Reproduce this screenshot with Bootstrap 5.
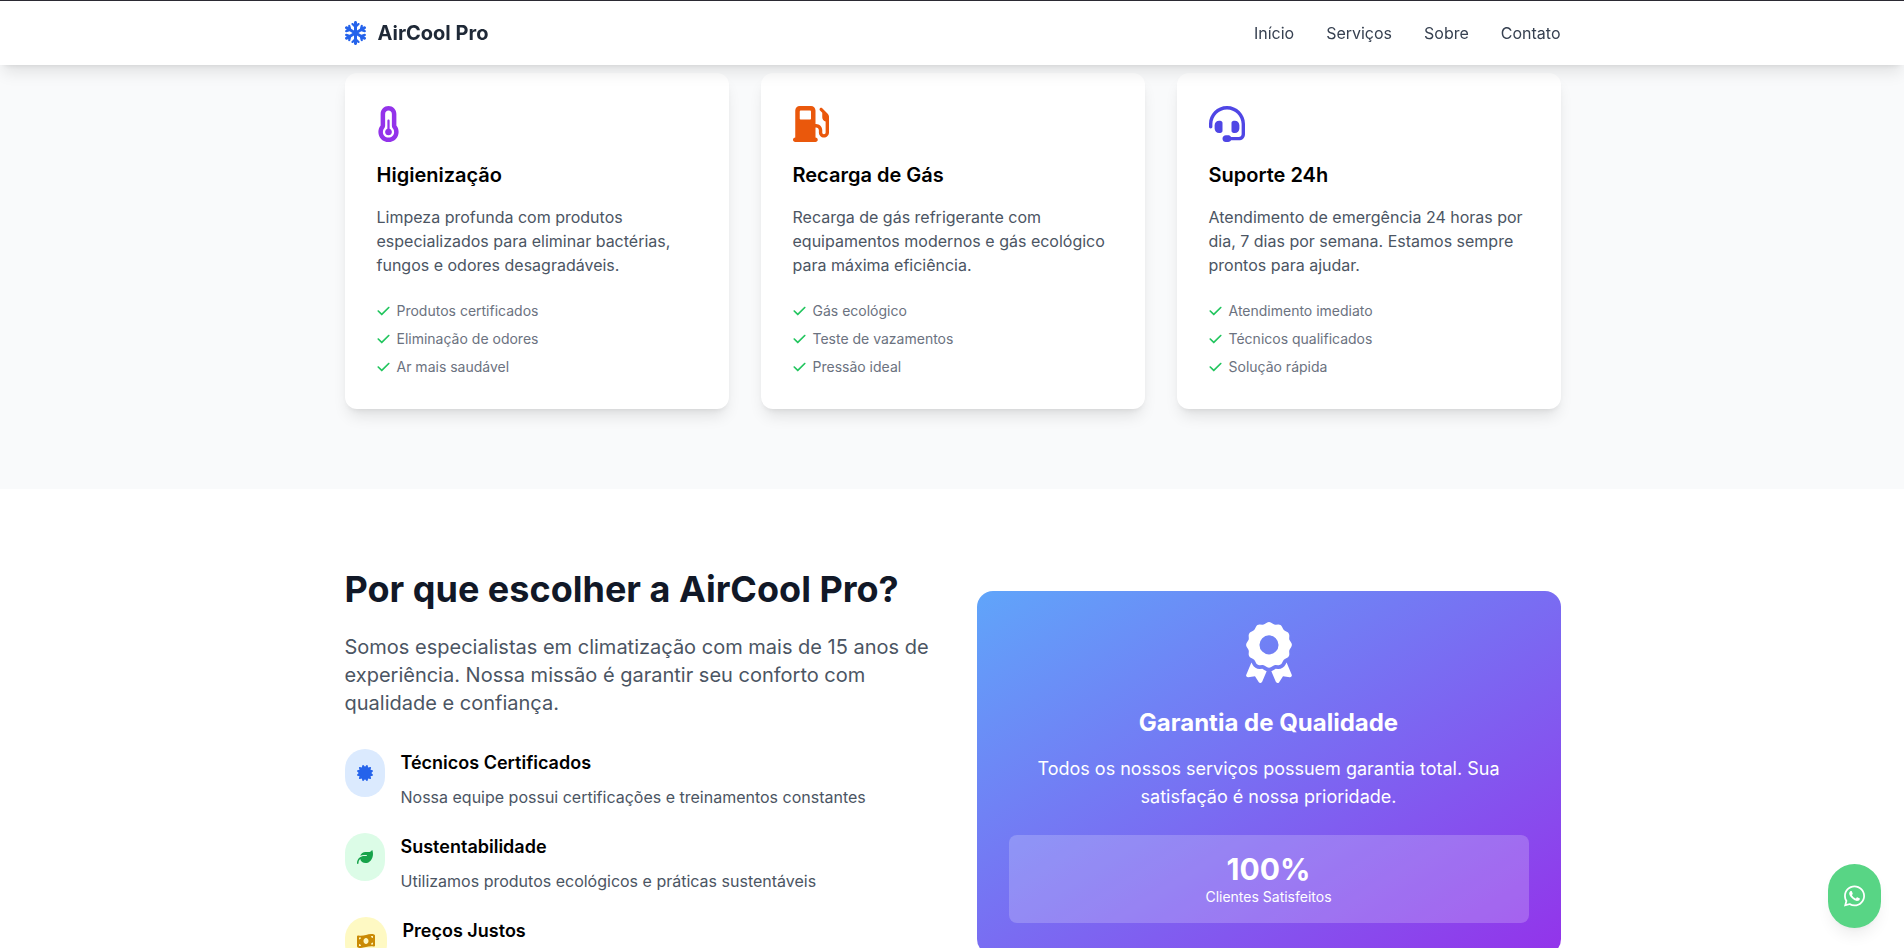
<!DOCTYPE html>
<html lang="pt-BR">
<head>
<meta charset="utf-8">
<meta name="viewport" content="width=device-width, initial-scale=1">
<title>AirCool Pro</title>
<link href="https://cdn.jsdelivr.net/npm/bootstrap@5.3.0/dist/css/bootstrap.min.css" rel="stylesheet">
<style>
  body { font-family: Inter, "Liberation Sans", sans-serif; font-size: 16px; line-height: 24px; color: #000; background: #fff; }
  .page-view { border-top: 1px solid #2b2a33; }
  .wrap { max-width: 1281px; margin: 0 auto; padding: 0 32px 0 33px; }
  .ico { display: block; fill: currentColor; flex-shrink: 0; }
  .soft-shadow { box-shadow: 0 10px 15px -3px rgba(0,0,0,.1), 0 4px 6px -4px rgba(0,0,0,.1); }

  .topbar { background: #fff; height: 64px; padding: 0; }
  .topbar .wrap { width: 100%; }
  .brand { font-size: 20px; line-height: 28px; font-weight: 700; color: #1f2937; gap: 12px; }
  .brand .ico { color: #2563eb; }
  .menu { gap: 32px; }
  .menu a { color: #374151; text-decoration: none; }

  .services { background: #f9fafb; padding: 8px 0 80px; }
  .services .row { --bs-gutter-x: 32px; --bs-gutter-y: 32px; margin-top: 0; }
  .services .row > * { margin-top: 0; }
  .service { background: #fff; border-radius: 12px; padding: 32px; height: 100%; }
  .service-icon { height: 38px; margin-bottom: 18px; display: flex; align-items: center; }
  .service h3 { font-size: 20px; line-height: 28px; font-weight: 600; margin-bottom: 16px; }
  .service p { color: #4b5563; margin-bottom: 24px; }
  .service ul { font-size: 14px; line-height: 20px; color: #6b7280; display: grid; gap: 8px; }
  .service li { display: flex; align-items: center; gap: 7px; }
  .service li .ico { color: #22c55e; }
  .tone-purple { color: #9333ea; }
  .tone-orange { color: #ea580c; }
  .tone-indigo { color: #4f46e5; }

  .about { padding: 80px 0; }
  .about .row { --bs-gutter-x: 48px; }
  .about h2 { font-size: 36px; line-height: 40px; font-weight: 700; color: #111827; margin-bottom: 24px; }
  .intro { font-size: 20px; line-height: 28px; color: #4b5563; margin: 0 -4px 32px 0; }
  .reasons { display: grid; gap: 24px; }
  .reason { display: flex; align-items: flex-start; gap: 16px; min-height: 60px; }
  .reason h4 { font-size: 18px; line-height: 28px; font-weight: 600; margin-bottom: 8px; }
  .reason p { color: #4b5563; margin: 0; }
  .pill { padding: 12px; border-radius: 999px; display: flex; align-items: center; height: 48px; }
  .pill-blue { background: #dbeafe; color: #2563eb; }
  .pill-green { background: #dcfce7; color: #16a34a; }
  .pill-yellow { background: #fef9c3; color: #ca8a04; }

  .guarantee { background: linear-gradient(to bottom right, #60a5fa, #9333ea); border-radius: 16px; padding: 31px 32px 32px; color: #fff; text-align: center; }
  .guarantee .ico { margin: 0 auto 24px; }
  .guarantee h3 { font-size: 24px; line-height: 32px; font-weight: 700; margin-bottom: 16px; }
  .guarantee p { font-size: 18px; line-height: 28px; margin-bottom: 24px; }
  .score { background: rgba(255,255,255,.2); border-radius: 8px; padding: 16px; }
  .score-value { font-size: 30px; line-height: 36px; font-weight: 700; }
  .score-label { font-size: 14px; line-height: 20px; }

  .chat { right: 23px; bottom: 20px; padding: 16px; border-radius: 999px; background: #58d585; color: #fff; box-shadow: 0 10px 15px -3px rgba(0,0,0,.07), 0 4px 6px -4px rgba(0,0,0,.07); height: 64px; display: flex; align-items: center; z-index: 1040; }
</style>
</head>
<body>
<svg class="d-none" aria-hidden="true">
  <symbol id="check" viewBox="0 0 448 512"><path d="M438.6 105.4c12.5 12.5 12.5 32.8 0 45.3l-256 256c-12.5 12.5-32.8 12.5-45.3 0l-128-128c-12.5-12.5-12.5-32.8 0-45.3s32.8-12.5 45.3 0L160 338.7 393.4 105.4c12.5-12.5 32.8-12.5 45.3 0z"/></symbol>
</svg>

<div class="page-view vh-100 overflow-hidden">
  <nav class="topbar soft-shadow navbar sticky-top">
    <div class="wrap d-flex align-items-center justify-content-between">
      <a href="#" class="brand d-flex align-items-center text-decoration-none">
        <svg class="ico" width="21" height="24" viewBox="0 0 448 512"><path d="M224 0c17.7 0 32 14.3 32 32V62.1l15-15c9.4-9.4 24.6-9.4 33.9 0s9.4 24.6 0 33.9l-49 49v70.3l61.4-35.8 17.7-66.1c3.4-12.8 16.6-20.4 29.4-17s20.4 16.6 17 29.4l-5.2 19.3 23.6-13.8c15.3-8.9 34.9-3.7 43.8 11.5s3.8 34.9-11.5 43.8l-25.3 14.8 21.7 5.8c12.8 3.4 20.4 16.6 17 29.4s-16.6 20.4-29.4 17l-67.7-18.1L287.5 256l60.9 35.5 67.7-18.1c12.8-3.4 26 4.2 29.4 17s-4.2 26-17 29.4l-21.7 5.8 25.3 14.8c15.3 8.9 20.4 28.5 11.5 43.8s-28.5 20.4-43.8 11.5l-23.6-13.8 5.2 19.3c3.4 12.8-4.2 26-17 29.4s-26-4.2-29.4-17l-17.7-66.1L256 311.7v70.3l49 49c9.4 9.4 9.4 24.6 0 33.9s-24.6 9.4-33.9 0l-15-15V480c0 17.7-14.3 32-32 32s-32-14.3-32-32V449.9l-15 15c-9.4 9.4-24.6 9.4-33.9 0s-9.4-24.6 0-33.9l49-49V311.7l-61.4 35.8-17.7 66.1c-3.4 12.8-16.6 20.4-29.4 17s-20.4-16.6-17-29.4l5.2-19.3L48.1 395.6c-15.3 8.9-34.9 3.7-43.8-11.5s-3.7-34.9 11.5-43.8l25.3-14.8-21.7-5.8c-12.8-3.4-20.4-16.6-17-29.4s16.6-20.4 29.4-17l67.7 18.1L160.5 256 99.6 220.5 31.9 238.6c-12.8 3.4-26-4.2-29.4-17s4.2-26 17-29.4l21.7-5.8L15.9 171.6C.6 162.7-4.5 143.1 4.4 127.9s28.5-20.4 43.8-11.5l23.6 13.8-5.2-19.3c-3.4-12.8 4.2-26 17-29.4s26 4.2 29.4 17l17.7 66.1L192 200.3V129.9L143 81c-9.4-9.4-9.4-24.6 0-33.9s24.6-9.4 33.9 0l15 15V32c0-17.7 14.3-32 32-32z"/></svg>
        <span>AirCool Pro</span>
      </a>
      <div class="menu d-flex">
        <a href="#">Início</a>
        <a href="#servicos">Serviços</a>
        <a href="#sobre">Sobre</a>
        <a href="#">Contato</a>
      </div>
    </div>
  </nav>

  <section class="services" id="servicos">
    <div class="wrap">
      <div class="row">
        <div class="col-4">
          <article class="service soft-shadow">
            <div class="service-icon tone-purple"><svg class="ico" width="23" height="36" viewBox="0 0 320 512"><path d="M160 64c-26.5 0-48 21.5-48 48V276.5c0 17.3-7.1 31.9-15.3 42.5C86.2 332.6 80 349.5 80 368c0 44.2 35.8 80 80 80s80-35.8 80-80c0-18.5-6.2-35.4-16.7-48.9c-8.2-10.6-15.3-25.2-15.3-42.5V112c0-26.5-21.5-48-48-48zM48 112C48 50.2 98.1 0 160 0s112 50.1 112 112V276.5c0 .1 .1 .3 .2 .6c.2 .6 .8 1.6 1.7 2.8c18.9 24.4 30.1 55 30.1 88.1c0 79.5-64.5 144-144 144S16 447.5 16 368c0-33.2 11.2-63.8 30.1-88.1c.9-1.2 1.5-2.2 1.7-2.8c.1-.3 .2-.5 .2-.6V112zM208 368c0 26.5-21.5 48-48 48s-48-21.5-48-48c0-20.9 13.4-38.7 32-45.3V208c0-8.8 7.2-16 16-16s16 7.2 16 16V322.7c18.6 6.6 32 24.4 32 45.3z"/></svg></div>
            <h3>Higienização</h3>
            <p>Limpeza profunda com produtos especializados para eliminar bactérias, fungos e odores desagradáveis.</p>
            <ul class="list-unstyled mb-0">
              <li><svg class="ico" width="13" height="14"><use href="#check"/></svg>Produtos certificados</li>
              <li><svg class="ico" width="13" height="14"><use href="#check"/></svg>Eliminação de odores</li>
              <li><svg class="ico" width="13" height="14"><use href="#check"/></svg>Ar mais saudável</li>
            </ul>
          </article>
        </div>
        <div class="col-4">
          <article class="service soft-shadow">
            <div class="service-icon tone-orange"><svg class="ico" width="36" height="36" viewBox="0 0 512 512"><path d="M32 64C32 28.7 60.7 0 96 0H256c35.3 0 64 28.7 64 64V256h8c48.6 0 88 39.4 88 88v32c0 13.3 10.7 24 24 24s24-10.7 24-24V222c-27.6-7.1-48-32.2-48-62V96L384 64c-8.8-8.8-8.8-23.2 0-32s23.2-8.8 32 0l77.3 77.3c12 12 18.7 28.3 18.7 45.3V168v24 32V376c0 39.8-32.2 72-72 72s-72-32.2-72-72V344c0-22.1-17.9-40-40-40h-8V448c17.7 0 32 14.3 32 32s-14.3 32-32 32H32c-17.7 0-32-14.3-32-32s14.3-32 32-32V64zM96 80v96c0 8.8 7.2 16 16 16H240c8.8 0 16-7.2 16-16V80c0-8.8-7.2-16-16-16H112c-8.8 0-16 7.2-16 16z"/></svg></div>
            <h3>Recarga de Gás</h3>
            <p>Recarga de gás refrigerante com equipamentos modernos e gás ecológico para máxima eficiência.</p>
            <ul class="list-unstyled mb-0">
              <li><svg class="ico" width="13" height="14"><use href="#check"/></svg>Gás ecológico</li>
              <li><svg class="ico" width="13" height="14"><use href="#check"/></svg>Teste de vazamentos</li>
              <li><svg class="ico" width="13" height="14"><use href="#check"/></svg>Pressão ideal</li>
            </ul>
          </article>
        </div>
        <div class="col-4">
          <article class="service soft-shadow">
            <div class="service-icon tone-indigo"><svg class="ico" width="36" height="36" viewBox="0 0 512 512"><path d="M256 48C141.1 48 48 141.1 48 256v40c0 13.3-10.7 24-24 24s-24-10.7-24-24V256C0 114.6 114.6 0 256 0S512 114.6 512 256V400.1c0 48.6-39.4 88-88.1 88L313.6 488c-8.3 14.3-23.8 24-41.6 24H240c-26.5 0-48-21.5-48-48s21.5-48 48-48h32c17.8 0 33.3 9.7 41.6 24l110.4 .1c22.1 0 40-17.9 40-40V256c0-114.9-93.1-208-208-208zM144 208h16c17.7 0 32 14.3 32 32V352c0 17.7-14.3 32-32 32H144c-35.3 0-64-28.7-64-64V272c0-35.3 28.7-64 64-64zm224 0c35.3 0 64 28.7 64 64v48c0 35.3-28.7 64-64 64H352c-17.7 0-32-14.3-32-32V240c0-17.7 14.3-32 32-32h16z"/></svg></div>
            <h3>Suporte 24h</h3>
            <p>Atendimento de emergência 24 horas por dia, 7 dias por semana. Estamos sempre prontos para ajudar.</p>
            <ul class="list-unstyled mb-0">
              <li><svg class="ico" width="13" height="14"><use href="#check"/></svg>Atendimento imediato</li>
              <li><svg class="ico" width="13" height="14"><use href="#check"/></svg>Técnicos qualificados</li>
              <li><svg class="ico" width="13" height="14"><use href="#check"/></svg>Solução rápida</li>
            </ul>
          </article>
        </div>
      </div>
    </div>
  </section>

  <section class="about" id="sobre">
    <div class="wrap">
      <div class="row align-items-center">
        <div class="col-6">
          <h2>Por que escolher a AirCool Pro?</h2>
          <p class="intro">Somos especialistas em climatização com mais de 15 anos de experiência. Nossa missão é garantir seu conforto com qualidade e confiança.</p>
          <div class="reasons">
            <div class="reason">
              <div class="pill pill-blue"><svg class="ico" width="16" height="16" viewBox="0 0 512 512"><path d="M211 7.3C205 1 196-1.4 187.6 .8s-14.9 8.9-17.1 17.3L154.7 80.6l-62-17.5c-8.4-2.4-17.4 0-23.5 6.1s-8.5 15.1-6.1 23.5l17.5 62L18.1 170.6c-8.4 2.1-15 8.7-17.3 17.1S1 205 7.3 211l46.2 45L7.3 301C1 307-1.4 316 .8 324.4s8.9 14.9 17.3 17.1l62.5 15.8-17.5 62c-2.4 8.4 0 17.4 6.1 23.5s15.1 8.5 23.5 6.1l62-17.5 15.8 62.5c2.1 8.4 8.7 15 17.1 17.3s17.3-.2 23.4-6.4l45-46.2 45 46.2c6.1 6.2 15 8.7 23.4 6.4s14.9-8.9 17.1-17.3l15.8-62.5 62 17.5c8.4 2.4 17.4 0 23.5-6.1s8.5-15.1 6.1-23.5l-17.5-62 62.5-15.8c8.4-2.1 15-8.7 17.3-17.1s-.2-17.4-6.4-23.4l-46.2-45 46.2-45c6.2-6.1 8.7-15 6.4-23.4s-8.9-14.9-17.3-17.1l-62.5-15.8 17.5-62c2.4-8.4 0-17.4-6.1-23.5s-15.1-8.5-23.5-6.1l-62 17.5L341.4 18.1c-2.1-8.4-8.7-15-17.1-17.3S307 1 301 7.3L256 53.5 211 7.3z"/></svg></div>
              <div>
                <h4>Técnicos Certificados</h4>
                <p>Nossa equipe possui certificações e treinamentos constantes</p>
              </div>
            </div>
            <div class="reason">
              <div class="pill pill-green"><svg class="ico" width="16" height="16" viewBox="0 0 512 512"><path d="M272 96c-78.6 0-145.1 51.5-167.7 122.5c33.6-17 71.5-26.5 111.7-26.5h88c8.8 0 16 7.2 16 16s-7.2 16-16 16H288 216s0 0 0 0c-16.6 0-32.7 1.9-48.3 5.4c-25.9 5.9-49.9 16.4-71.4 30.7c0 0 0 0 0 0C38.3 298.8 0 364.9 0 440v16c0 13.3 10.7 24 24 24s24-10.7 24-24V440c0-48.7 20.7-92.5 53.8-123.2C121.6 392.3 190.3 448 272 448l1 0c132.1-.7 239-130.9 239-291.4c0-42.6-7.5-83.1-21.1-119.6c-2.6-6.9-12.7-6.6-16.2-.1C455.9 72.1 418.7 96 376 96L272 96z"/></svg></div>
              <div>
                <h4>Sustentabilidade</h4>
                <p>Utilizamos produtos ecológicos e práticas sustentáveis</p>
              </div>
            </div>
            <div class="reason">
              <div class="pill pill-yellow"><svg class="ico" width="18" height="16" viewBox="0 0 576 512"><path d="M0 112.5V422.3c0 18 10.1 35 27 41.3c87 32.5 174 10.3 261-11.9c79.8-20.3 159.6-40.7 239.3-18.9c23 6.3 48.7-9.5 48.7-33.4V89.7c0-18-10.1-35-27-41.3C462 15.9 375 38.1 288 60.3C208.2 80.6 128.4 100.9 48.7 79.1C25.6 72.8 0 88.6 0 112.5zM288 352c-44.2 0-80-43-80-96s35.8-96 80-96s80 43 80 96s-35.8 96-80 96zM64 352c35.3 0 64 28.7 64 64H64V352zm64-208c0 35.3-28.7 64-64 64V144h64zM512 304v64H448c0-35.3 28.7-64 64-64zM448 96h64v64c-35.3 0-64-28.7-64-64z"/></svg></div>
              <div>
                <h4>Preços Justos</h4>
              </div>
            </div>
          </div>
        </div>
        <div class="col-6">
          <div class="guarantee">
            <svg class="ico" width="46" height="61" viewBox="0 0 384 512"><path d="M173.8 5.5c11-7.3 25.4-7.3 36.4 0L228 17.2c6 3.9 13 5.8 20.1 5.4l21.3-1.3c13.2-.8 25.6 6.4 31.5 18.2l9.6 19.1c3.2 6.4 8.4 11.5 14.7 14.7L344.5 83c11.8 5.9 19 18.3 18.2 31.5l-1.3 21.3c-.4 7.1 1.5 14.2 5.4 20.1l11.8 17.8c7.3 11 7.3 25.4 0 36.4L366.8 228c-3.9 6-5.8 13-5.4 20.1l1.3 21.3c.8 13.2-6.4 25.6-18.2 31.5l-19.1 9.6c-6.4 3.2-11.5 8.4-14.7 14.7L301 344.5c-5.9 11.8-18.3 19-31.5 18.2l-21.3-1.3c-7.1-.4-14.2 1.5-20.1 5.4l-17.8 11.8c-11 7.3-25.4 7.3-36.4 0L156 366.8c-6-3.9-13-5.8-20.1-5.4l-21.3 1.3c-13.2 .8-25.6-6.4-31.5-18.2l-9.6-19.1c-3.2-6.4-8.4-11.5-14.7-14.7L39.5 301c-11.8-5.9-19-18.3-18.2-31.5l1.3-21.3c.4-7.1-1.5-14.2-5.4-20.1L5.5 210.2c-7.3-11-7.3-25.4 0-36.4L17.2 156c3.9-6 5.8-13 5.4-20.1l-1.3-21.3c-.8-13.2 6.4-25.6 18.2-31.5l19.1-9.6C65 70.2 70.2 65 73.4 58.6L83 39.5c5.9-11.8 18.3-19 31.5-18.2l21.3 1.3c7.1 .4 14.2-1.5 20.1-5.4L173.8 5.5zM272 192a80 80 0 1 0 -160 0 80 80 0 1 0 160 0zM1.3 441.8L44.4 339.3c.2 .1 .3 .2 .4 .4l9.6 19.1c11.7 23.2 36 37.3 62 35.8l21.3-1.3c.2 0 .5 0 .7 .2l17.8 11.8c5.1 3.3 10.5 5.9 16.1 7.7l-37.6 89.3c-2.3 5.5-7.4 9.2-13.3 9.7s-11.6-2.2-14.8-7.2L74.4 455.5l-56.1 8.3c-5.7 .8-11.4-1.5-15-6s-4.3-10.7-2.1-16zm248 60.4L211.7 413c5.6-1.8 11-4.3 16.1-7.7l17.8-11.8c.2-.1 .4-.2 .7-.2l21.3 1.3c26 1.5 50.3-12.6 62-35.8l9.6-19.1c.1-.2 .2-.3 .4-.4l43.2 102.5c2.2 5.3 1.4 11.4-2.1 16s-9.3 6.9-15 6l-56.1-8.3-32.2 49.2c-3.2 5-8.9 7.7-14.8 7.2s-11-4.3-13.3-9.7z"/></svg>
            <h3>Garantia de Qualidade</h3>
            <p>Todos os nossos serviços possuem garantia total. Sua satisfação é nossa prioridade.</p>
            <div class="score">
              <div class="score-value">100%</div>
              <div class="score-label">Clientes Satisfeitos</div>
            </div>
          </div>
        </div>
      </div>
    </div>
  </section>
</div>

<a href="#" class="chat position-fixed" aria-label="WhatsApp"><svg class="ico" width="21" height="24" viewBox="0 0 448 512"><path d="M380.9 97.1C339 55.1 283.2 32 223.9 32c-122.4 0-222 99.6-222 222 0 39.1 10.2 77.3 29.6 111L0 480l117.7-30.9c32.4 17.7 68.9 27 106.1 27h.1c122.3 0 224.1-99.6 224.1-222 0-59.3-25.2-115-67.1-157zm-157 341.6c-33.2 0-65.7-8.9-94-25.7l-6.7-4-69.8 18.3L72 359.2l-4.4-7c-18.5-29.4-28.2-63.3-28.2-98.2 0-101.7 82.8-184.5 184.6-184.5 49.3 0 95.6 19.2 130.4 54.1 34.8 34.9 56.2 81.2 56.1 130.5 0 101.8-84.9 184.6-186.6 184.6zm101.2-138.2c-5.5-2.8-32.8-16.2-37.9-18-5.1-1.9-8.8-2.8-12.5 2.8-3.7 5.6-14.3 18-17.6 21.8-3.2 3.7-6.5 4.2-12 1.4-32.6-16.3-54-29.1-75.5-66-5.7-9.8 5.7-9.1 16.3-30.3 1.8-3.7.9-6.9-.5-9.7-1.4-2.8-12.5-30.1-17.1-41.2-4.5-10.8-9.1-9.3-12.5-9.5-3.2-.2-6.9-.2-10.6-.2-3.7 0-9.7 1.4-14.8 6.9-5.1 5.6-19.4 19-19.4 46.3 0 27.3 19.9 53.7 22.6 57.4 2.8 3.7 39.1 59.7 94.8 83.8 35.2 15.2 49 16.5 66.6 13.9 10.7-1.6 32.8-13.4 37.4-26.4 4.6-13 4.6-24.1 3.2-26.4-1.3-2.5-5-3.9-10.5-6.6z"/></svg></a>
<script src="https://cdn.jsdelivr.net/npm/bootstrap@5.3.0/dist/js/bootstrap.bundle.min.js"></script>
</body>
</html>
